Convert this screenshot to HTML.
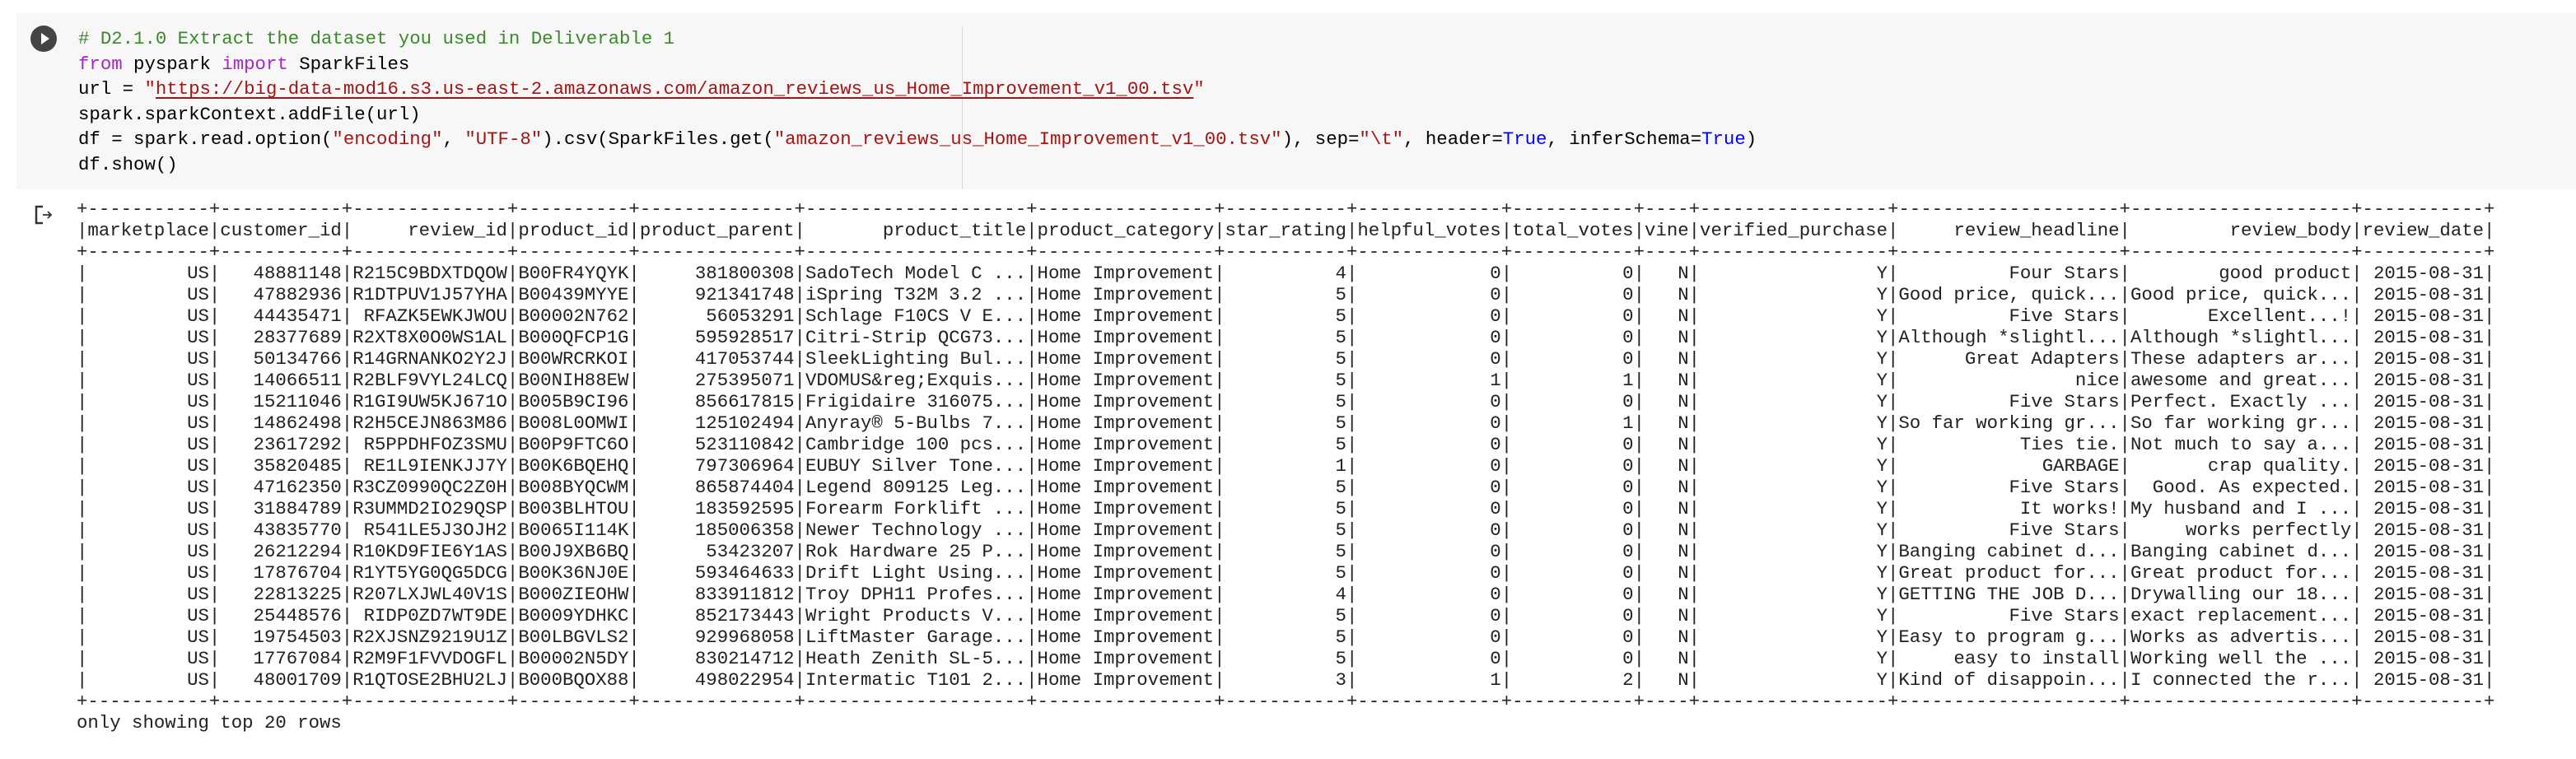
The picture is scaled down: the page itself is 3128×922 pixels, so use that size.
<!DOCTYPE html>
<html><head><meta charset="utf-8"><style>
html,body{margin:0;padding:0;background:#fff;width:3128px;height:922px;overflow:hidden;position:relative}
.cell{position:absolute;left:20px;top:16px;width:3108px;height:214px;background:#f7f7f7}
.ruler{position:absolute;left:1168px;top:32px;width:1px;height:198px;background:#d9d9d9}
.run{position:absolute;left:37px;top:31px;width:32px;height:32px;border-radius:50%;background:#444}
.run:after{content:"";position:absolute;left:13px;top:9px;border-left:10px solid #fff;border-top:7px solid transparent;border-bottom:7px solid transparent}
pre{margin:0;position:absolute;font-family:"Liberation Mono",monospace;font-size:22.35px;color:#000;white-space:pre}
.code{left:95px;top:32px;line-height:30.6px}
.c{color:#3a8a2a}.k{color:#a626c8}.s{color:#a31515}.t{color:#0000ff}
.u{text-decoration:underline;text-decoration-color:#a31515;text-decoration-thickness:2px;text-underline-offset:4px}
.out{left:93px;top:241px;line-height:26px;color:#212121}
</style></head><body>
<div class="cell"></div>
<div class="ruler"></div>
<div class="run"></div>
<pre class="code"><span class="c"># D2.1.0 Extract the dataset you used in Deliverable 1</span>
<span class="k">from</span> pyspark <span class="k">import</span> SparkFiles
url = <span class="s">"<span class="u">https://big-data-mod16.s3.us-east-2.amazonaws.com/amazon_reviews_us_Home_Improvement_v1_00.tsv</span>"</span>
spark.sparkContext.addFile(url)
df = spark.read.option(<span class="s">"encoding"</span>, <span class="s">"UTF-8"</span>).csv(SparkFiles.get(<span class="s">"amazon_reviews_us_Home_Improvement_v1_00.tsv"</span>), sep=<span class="s">"\t"</span>, header=<span class="t">True</span>, inferSchema=<span class="t">True</span>)
df.show()</pre>
<svg style="position:absolute;left:42px;top:249px" width="26" height="24" viewBox="0 0 26 24"><path d="M10 2H2V22H10" fill="none" stroke="#333" stroke-width="2.5"/><path d="M10 12H20M16 8L20 12L16 16" fill="none" stroke="#333" stroke-width="1.8"/></svg>
<pre class="out">+-----------+-----------+--------------+----------+--------------+--------------------+----------------+-----------+-------------+-----------+----+-----------------+--------------------+--------------------+-----------+
|marketplace|customer_id|     review_id|product_id|product_parent|       product_title|product_category|star_rating|helpful_votes|total_votes|vine|verified_purchase|     review_headline|         review_body|review_date|
+-----------+-----------+--------------+----------+--------------+--------------------+----------------+-----------+-------------+-----------+----+-----------------+--------------------+--------------------+-----------+
|         US|   48881148|R215C9BDXTDQOW|B00FR4YQYK|     381800308|SadoTech Model C ...|Home Improvement|          4|            0|          0|   N|                Y|          Four Stars|        good product| 2015-08-31|
|         US|   47882936|R1DTPUV1J57YHA|B00439MYYE|     921341748|iSpring T32M 3.2 ...|Home Improvement|          5|            0|          0|   N|                Y|Good price, quick...|Good price, quick...| 2015-08-31|
|         US|   44435471| RFAZK5EWKJWOU|B00002N762|      56053291|Schlage F10CS V E...|Home Improvement|          5|            0|          0|   N|                Y|          Five Stars|       Excellent...!| 2015-08-31|
|         US|   28377689|R2XT8X0O0WS1AL|B000QFCP1G|     595928517|Citri-Strip QCG73...|Home Improvement|          5|            0|          0|   N|                Y|Although *slightl...|Although *slightl...| 2015-08-31|
|         US|   50134766|R14GRNANKO2Y2J|B00WRCRKOI|     417053744|SleekLighting Bul...|Home Improvement|          5|            0|          0|   N|                Y|      Great Adapters|These adapters ar...| 2015-08-31|
|         US|   14066511|R2BLF9VYL24LCQ|B00NIH88EW|     275395071|VDOMUS&amp;reg;Exquis...|Home Improvement|          5|            1|          1|   N|                Y|                nice|awesome and great...| 2015-08-31|
|         US|   15211046|R1GI9UW5KJ671O|B005B9CI96|     856617815|Frigidaire 316075...|Home Improvement|          5|            0|          0|   N|                Y|          Five Stars|Perfect. Exactly ...| 2015-08-31|
|         US|   14862498|R2H5CEJN863M86|B008L0OMWI|     125102494|Anyray® 5-Bulbs 7...|Home Improvement|          5|            0|          1|   N|                Y|So far working gr...|So far working gr...| 2015-08-31|
|         US|   23617292| R5PPDHFOZ3SMU|B00P9FTC6O|     523110842|Cambridge 100 pcs...|Home Improvement|          5|            0|          0|   N|                Y|           Ties tie.|Not much to say a...| 2015-08-31|
|         US|   35820485| RE1L9IENKJJ7Y|B00K6BQEHQ|     797306964|EUBUY Silver Tone...|Home Improvement|          1|            0|          0|   N|                Y|             GARBAGE|       crap quality.| 2015-08-31|
|         US|   47162350|R3CZ0990QC2Z0H|B008BYQCWM|     865874404|Legend 809125 Leg...|Home Improvement|          5|            0|          0|   N|                Y|          Five Stars|  Good. As expected.| 2015-08-31|
|         US|   31884789|R3UMMD2IO29QSP|B003BLHTOU|     183592595|Forearm Forklift ...|Home Improvement|          5|            0|          0|   N|                Y|           It works!|My husband and I ...| 2015-08-31|
|         US|   43835770| R541LE5J3OJH2|B0065I114K|     185006358|Newer Technology ...|Home Improvement|          5|            0|          0|   N|                Y|          Five Stars|     works perfectly| 2015-08-31|
|         US|   26212294|R10KD9FIE6Y1AS|B00J9XB6BQ|      53423207|Rok Hardware 25 P...|Home Improvement|          5|            0|          0|   N|                Y|Banging cabinet d...|Banging cabinet d...| 2015-08-31|
|         US|   17876704|R1YT5YG0QG5DCG|B00K36NJ0E|     593464633|Drift Light Using...|Home Improvement|          5|            0|          0|   N|                Y|Great product for...|Great product for...| 2015-08-31|
|         US|   22813225|R207LXJWL40V1S|B000ZIEOHW|     833911812|Troy DPH11 Profes...|Home Improvement|          4|            0|          0|   N|                Y|GETTING THE JOB D...|Drywalling our 18...| 2015-08-31|
|         US|   25448576| RIDP0ZD7WT9DE|B0009YDHKC|     852173443|Wright Products V...|Home Improvement|          5|            0|          0|   N|                Y|          Five Stars|exact replacement...| 2015-08-31|
|         US|   19754503|R2XJSNZ9219U1Z|B00LBGVLS2|     929968058|LiftMaster Garage...|Home Improvement|          5|            0|          0|   N|                Y|Easy to program g...|Works as advertis...| 2015-08-31|
|         US|   17767084|R2M9F1FVVDOGFL|B00002N5DY|     830214712|Heath Zenith SL-5...|Home Improvement|          5|            0|          0|   N|                Y|     easy to install|Working well the ...| 2015-08-31|
|         US|   48001709|R1QTOSE2BHU2LJ|B000BQOX88|     498022954|Intermatic T101 2...|Home Improvement|          3|            1|          2|   N|                Y|Kind of disappoin...|I connected the r...| 2015-08-31|
+-----------+-----------+--------------+----------+--------------+--------------------+----------------+-----------+-------------+-----------+----+-----------------+--------------------+--------------------+-----------+
only showing top 20 rows</pre>
</body></html>
